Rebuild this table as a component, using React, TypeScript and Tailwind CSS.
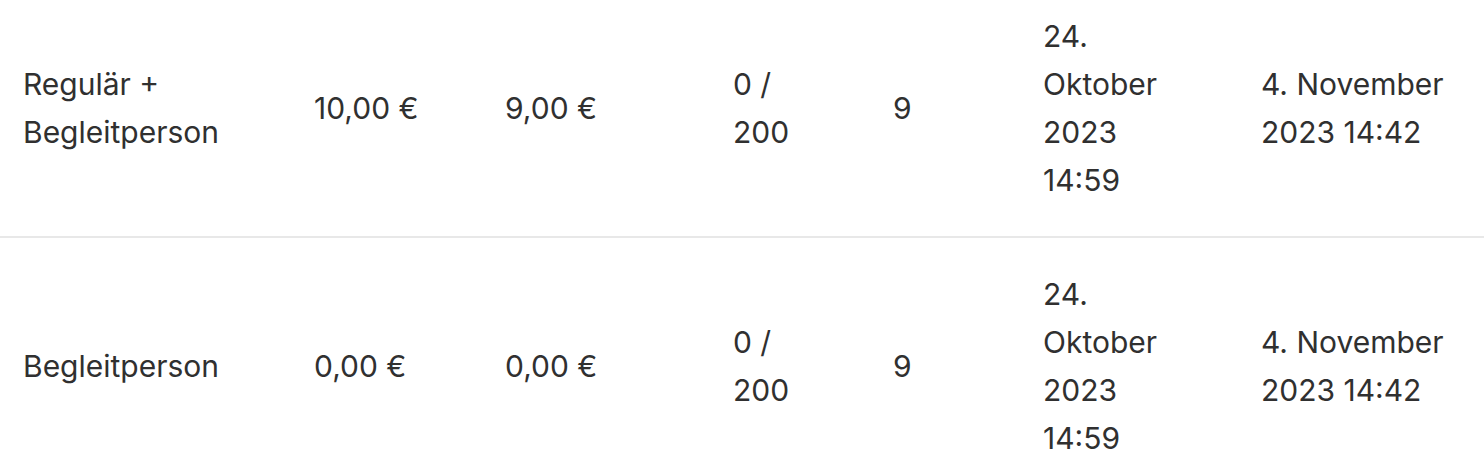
const rows = [
  {
    name: 'Regulär + Begleitperson',
    price: '10,00 €',
    net: '9,00 €',
    quota: '0 / 200',
    count: '9',
    created: '24. Oktober 2023 14:59',
    updated: '4. November 2023 14:42',
  },
  {
    name: 'Begleitperson',
    price: '0,00 €',
    net: '0,00 €',
    quota: '0 / 200',
    count: '9',
    created: '24. Oktober 2023 14:59',
    updated: '4. November 2023 14:42',
  },
];

const cell = 'px-[23px] py-[32px] align-middle text-left font-normal';

export default function App() {
  return (
    <div
      className="w-full bg-white text-[#303030] text-[30px] leading-[48px]"
      style={{ fontFamily: 'Inter, "Noto Sans", sans-serif' }}
    >
      <table className="-mt-[20px] w-[1484px] table-fixed border-collapse">
        <colgroup>
          <col className="w-[291px]" />
          <col className="w-[191px]" />
          <col className="w-[228px]" />
          <col className="w-[160px]" />
          <col className="w-[150px]" />
          <col className="w-[218px]" />
          <col className="w-[246px]" />
        </colgroup>
        <tbody>
          {rows.map((r, i) => (
            <tr
              key={i}
              className={i < rows.length - 1 ? 'border-b-2 border-[#e8e8e8]' : ''}
            >
              <td className={cell}>
                <div className="max-w-[220px]">{r.name}</div>
              </td>
              <td className={cell}>{r.price}</td>
              <td className={cell}>{r.net}</td>
              <td className={cell}>
                <div className="max-w-[80px]">{r.quota}</div>
              </td>
              <td className={cell}>{r.count}</td>
              <td className={cell}>
                <div className="max-w-[130px]">{r.created}</div>
              </td>
              <td className={cell}>
                <div className="max-w-[195px]">{r.updated}</div>
              </td>
            </tr>
          ))}
        </tbody>
      </table>
    </div>
  );
}
